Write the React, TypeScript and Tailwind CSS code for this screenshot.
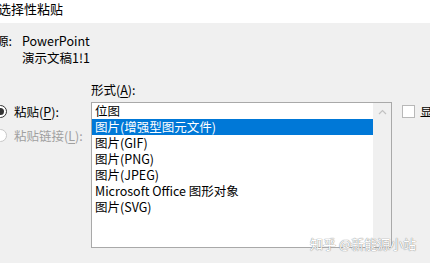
import { ReactNode } from 'react';

const formats = [
  '位图',
  '图片(增强型图元文件)',
  '图片(GIF)',
  '图片(PNG)',
  '图片(JPEG)',
  'Microsoft Office 图形对象',
  '图片(SVG)',
];

function Key({ children }: { children: ReactNode }) {
  return <span className="underline underline-offset-2">{children}</span>;
}

function Radio({ checked, disabled, children }: { checked?: boolean; disabled?: boolean; children: ReactNode }) {
  return (
    <div className={`flex items-center h-[17px] whitespace-nowrap ${disabled ? 'text-[#a0a0a0]' : 'text-black'}`}>
      <span
        className={`shrink-0 -ml-[6px] mr-[7px] w-[13px] h-[13px] rounded-full border flex items-center justify-center bg-white ${
          disabled ? 'border-[#c8c8c8]' : 'border-[#333]'
        }`}
      >
        {checked && <span className="w-[7px] h-[7px] rounded-full bg-[#333]" />}
      </span>
      <span>{children}</span>
    </div>
  );
}

export default function App() {
  return (
    <div
      className="relative w-[430px] h-[263px] overflow-hidden bg-[#f0f0f0] text-[12.5px] leading-[17px] text-black"
      style={{ fontFamily: '"Noto Sans CJK SC", "Noto Sans", sans-serif' }}
    >
      <div className="h-[23px] bg-white -ml-[2px] text-[13px]">选择性粘贴</div>

      <div className="flex pt-[9px]">
        <div className="w-[26px] shrink-0 -ml-[4px]">源:</div>
        <div className="flex flex-col">
          <span>PowerPoint</span>
          <span>演示文稿1!1</span>
        </div>
      </div>

      <div className="mt-[15px] pl-[91px]">
        形式(<Key>A</Key>):
      </div>

      <div className="flex mt-[4px]">
        <div className="w-[91px] shrink-0 flex flex-col gap-[7px] pt-[1px]">
          <Radio checked>
            粘贴(<Key>P</Key>):
          </Radio>
          <Radio disabled>
            粘贴链接(<Key>L</Key>):
          </Radio>
        </div>

        <div className="w-[301px] h-[146px] shrink-0 border border-[#a9a9a9] bg-white flex">
          <div className="w-[281px] flex flex-col">
            {formats.map((f, i) => (
              <div
                key={f}
                className={`h-[16px] leading-[16px] pl-[3px] whitespace-nowrap ${
                  i === 1 ? 'bg-[#0078d7] text-white' : ''
                }`}
              >
                {f}
              </div>
            ))}
          </div>
          <div className="w-[18px] bg-[#f0f0f0] flex justify-center pt-[6px]">
            <svg width="9" height="6" viewBox="0 0 9 6" fill="none">
              <path d="M1 5 L4.5 1.5 L8 5" stroke="#c2c2c2" strokeWidth="1.2" />
            </svg>
          </div>
        </div>

        <div className="shrink-0 flex items-start pt-[3px] ml-[10px] whitespace-nowrap">
          <span className="shrink-0 w-[13px] h-[13px] border border-[#b8b8b8] bg-white mr-[5px]" />
          <span className="-mt-[2px]">显示为图标</span>
        </div>
      </div>

      <div
        className="absolute left-[310px] top-[236px] text-[13px] leading-[16px] text-white whitespace-nowrap"
        style={{ textShadow: '0 0 1px #888, 0 0 1px #888' }}
      >
        知乎 @新能源小站
      </div>
    </div>
  );
}
